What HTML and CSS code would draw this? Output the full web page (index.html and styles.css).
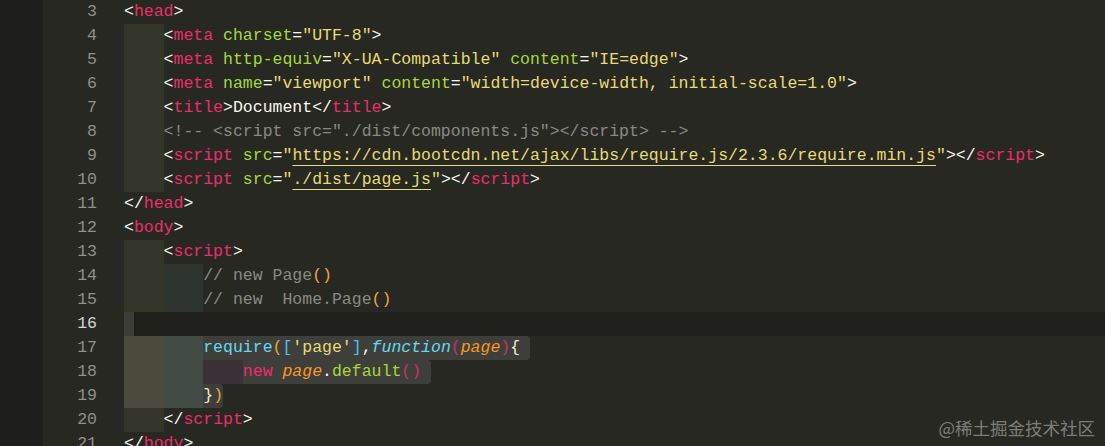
FILE: index.html
```html
<!DOCTYPE html>
<html lang="en">
<head>
<meta charset="UTF-8">
<title>Editor</title>
<link rel="stylesheet" href="styles.css">
</head>
<body>
<div class="editor">
  <div class="row"><span class="strip"></span><span class="num">3</span><span class="pad"></span><span class="code"><span class="p">&lt;</span><span class="t">head</span><span class="p">&gt;</span></span></div>
  <div class="row"><span class="strip"></span><span class="num">4</span><span class="pad"></span><span class="code"><span class="blk g1">    </span><span class="p">&lt;</span><span class="t">meta</span> <span class="a">charset</span><span class="p">=</span><span class="s">"UTF-8"</span><span class="p">&gt;</span></span></div>
  <div class="row"><span class="strip"></span><span class="num">5</span><span class="pad"></span><span class="code"><span class="blk g1">    </span><span class="p">&lt;</span><span class="t">meta</span> <span class="a">http-equiv</span><span class="p">=</span><span class="s">"X-UA-Compatible"</span> <span class="a">content</span><span class="p">=</span><span class="s">"IE=edge"</span><span class="p">&gt;</span></span></div>
  <div class="row"><span class="strip"></span><span class="num">6</span><span class="pad"></span><span class="code"><span class="blk g1">    </span><span class="p">&lt;</span><span class="t">meta</span> <span class="a">name</span><span class="p">=</span><span class="s">"viewport"</span> <span class="a">content</span><span class="p">=</span><span class="s">"width=device-width, initial-scale=1.0"</span><span class="p">&gt;</span></span></div>
  <div class="row"><span class="strip"></span><span class="num">7</span><span class="pad"></span><span class="code"><span class="blk g1">    </span><span class="p">&lt;</span><span class="t">title</span><span class="p">&gt;Document&lt;/</span><span class="t">title</span><span class="p">&gt;</span></span></div>
  <div class="row"><span class="strip"></span><span class="num">8</span><span class="pad"></span><span class="code"><span class="blk g1">    </span><span class="c">&lt;!-- &lt;script src="./dist/components.js"&gt;&lt;/script&gt; --&gt;</span></span></div>
  <div class="row"><span class="strip"></span><span class="num">9</span><span class="pad"></span><span class="code"><span class="blk g1">    </span><span class="p">&lt;</span><span class="t">script</span> <span class="a">src</span><span class="p">=</span><span class="s">"<span class="u">https://cdn.bootcdn.net/ajax/libs/require.js/2.3.6/require.min.js</span>"</span><span class="p">&gt;&lt;/</span><span class="t">script</span><span class="p">&gt;</span></span></div>
  <div class="row"><span class="strip"></span><span class="num">10</span><span class="pad"></span><span class="code"><span class="blk g1">    </span><span class="p">&lt;</span><span class="t">script</span> <span class="a">src</span><span class="p">=</span><span class="s">"<span class="u">./dist/page.js</span>"</span><span class="p">&gt;&lt;/</span><span class="t">script</span><span class="p">&gt;</span></span></div>
  <div class="row"><span class="strip"></span><span class="num">11</span><span class="pad"></span><span class="code"><span class="p">&lt;/</span><span class="t">head</span><span class="p">&gt;</span></span></div>
  <div class="row"><span class="strip"></span><span class="num">12</span><span class="pad"></span><span class="code"><span class="p">&lt;</span><span class="t">body</span><span class="p">&gt;</span></span></div>
  <div class="row"><span class="strip"></span><span class="num">13</span><span class="pad"></span><span class="code"><span class="blk g1">    </span><span class="p">&lt;</span><span class="t">script</span><span class="p">&gt;</span></span></div>
  <div class="row"><span class="strip"></span><span class="num">14</span><span class="pad"></span><span class="code"><span class="blk g1">    </span><span class="blk g2">    </span><span class="c">// new Page</span><span class="b1">()</span></span></div>
  <div class="row"><span class="strip"></span><span class="num">15</span><span class="pad"></span><span class="code"><span class="blk g1">    </span><span class="blk g2">    </span><span class="c">// new  Home.Page</span><span class="b1">()</span></span></div>
  <div class="row"><span class="strip"></span><span class="num cur-num">16</span><span class="pad"></span><span class="code cur"><span class="blk sel sel-first"> </span></span></div>
  <div class="row"><span class="strip"></span><span class="num">17</span><span class="pad"></span><span class="code"><span class="blk g1s">    </span><span class="blk g2s">    </span><span class="blk sel sel-r"><span class="f">require</span><span class="b1">(</span><span class="b3">[</span><span class="s">'page'</span><span class="b3">]</span><span class="p">,</span><span class="fi">function</span><span class="b2">(</span><span class="v">page</span><span class="b2">)</span><span class="br">{</span> </span></span></div>
  <div class="row"><span class="strip"></span><span class="num">18</span><span class="pad"></span><span class="code"><span class="blk g1s">    </span><span class="blk g2s">    </span><span class="blk g3s">    </span><span class="blk sel sel-r"><span class="k">new</span> <span class="v">page</span><span class="p">.</span><span class="a">default</span><span class="b2">()</span> </span></span></div>
  <div class="row"><span class="strip"></span><span class="num">19</span><span class="pad"></span><span class="code"><span class="blk g1s">    </span><span class="blk g2s">    </span><span class="blk sel sel-r"><span class="br">}</span><span class="b1">)</span></span></span></div>
  <div class="row"><span class="strip"></span><span class="num">20</span><span class="pad"></span><span class="code"><span class="blk g1">    </span><span class="p">&lt;/</span><span class="t">script</span><span class="p">&gt;</span></span></div>
  <div class="row"><span class="strip"></span><span class="num">21</span><span class="pad"></span><span class="code"><span class="p">&lt;/</span><span class="t">body</span><span class="p">&gt;</span></span></div>
</div>
<div class="watermark">@稀土掘金技术社区</div>
</body>
</html>
```
FILE: styles.css
```css
html, body {
  margin: 0;
  padding: 0;
  height: 100%;
  overflow: hidden;
  background: #272822;
}

.editor {
  display: flex;
  flex-direction: column;
  font-family: "Liberation Mono", "DejaVu Sans Mono", monospace;
  font-size: 16.5px;
  line-height: 24px;
  color: #f8f8f2;
}

.row {
  display: flex;
  height: 24px;
}

.strip {
  flex: 0 0 43px;
  background: #1e1f1c;
}

.num {
  flex: 0 0 54px;
  text-align: right;
  color: #90908a;
}

.cur-num {
  color: #d6d6d0;
}

.pad {
  flex: 0 0 27px;
}

.code {
  flex: 1;
  white-space: pre;
}

.cur {
  background: #1f201c;
}

.blk {
  display: inline-block;
  height: 24px;
  vertical-align: top;
}

/* indent guides */
.g1 { background: #35362a; }
.g2 { background: #2e352e; }
.g1s { background: #4a4a3d; }
.g2s { background: #424c44; }
.g3s { background: #3a3237; }

.sel {
  background: #3e3f3b;
}
.sel-r {
  border-radius: 0 4px 4px 0;
}
.sel-first {
  background: #3c3d38;
}

/* syntax */
.t { color: #ec2d6c; }
.a { color: #a6d83a; }
.s { color: #e6db74; }
.p { color: #f8f8f2; }
.c { color: #8a8a84; }
.u {
  text-decoration: underline;
  text-decoration-color: #e6db74;
  text-decoration-thickness: 1px;
  text-underline-offset: 5px;
}
.f { color: #66d9ef; }
.fi { color: #66d9ef; font-style: italic; }
.v { color: #fd971f; font-style: italic; }
.k { color: #f92672; }
.b1 { color: #eba83a; }
.b2 { color: #c2336c; }
.b3 { color: #4fc1e9; }
.br { color: #ecebd8; }

.watermark {
  position: absolute;
  right: 10px;
  bottom: 6px;
  font-family: "Noto Sans CJK SC", "Noto Sans", sans-serif;
  font-size: 17.5px;
  line-height: 24px;
  color: rgba(200, 200, 200, 0.55);
}
```
